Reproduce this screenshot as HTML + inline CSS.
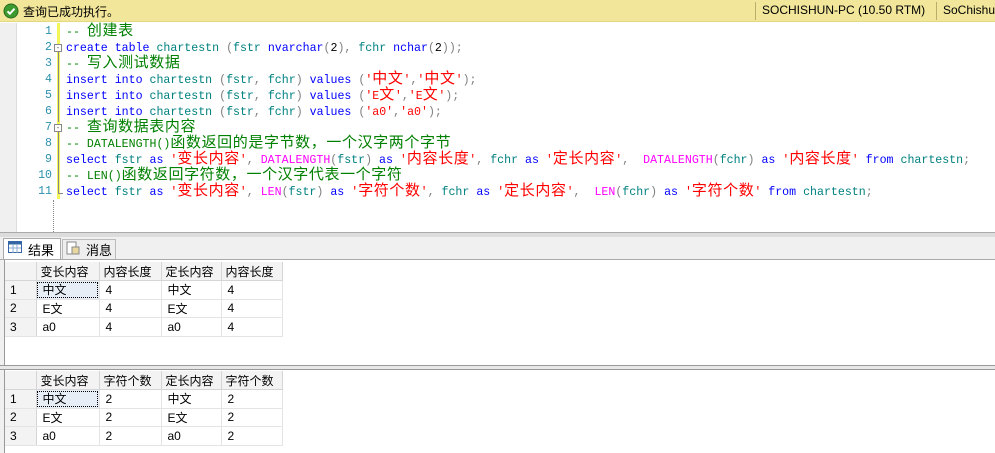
<!DOCTYPE html>
<html><head><meta charset="utf-8"><style>
*{margin:0;padding:0;box-sizing:border-box}
body{width:995px;height:453px;overflow:hidden;background:#fff;position:relative;font-family:"Liberation Sans","Noto Sans CJK SC",sans-serif;font-size:12px}
.abs{position:absolute}
#status{left:0;top:0;width:995px;height:22px;background:#f1e69a;border-bottom:1px solid #e5d980}
.sep{position:absolute;top:2px;width:1px;height:18px;background:#b8ad6a}
.code{position:absolute;left:66px;height:16px;font-family:"Liberation Mono","Noto Sans CJK SC",monospace;font-size:11.6px;white-space:pre;color:#000;line-height:16px}
.cj{font-family:"Noto Sans CJK SC",sans-serif;font-size:15px;line-height:0;letter-spacing:0.6px}
.k{color:#0000ff}.g{color:#008000}.r{color:#ff0000}.t{color:#008080}.m{color:#ff00ff}.p{color:#808080}
.ln{position:absolute;width:46px;text-align:right;font-family:"Liberation Mono",monospace;font-size:11.6px;color:#2b91af;line-height:16px}
table{border-collapse:collapse;position:absolute;left:5px}
td{height:18.5px;border-right:1px solid #e4e4e4;border-bottom:1px solid #e4e4e4;font-size:12px;padding:0 0 0 6px;white-space:nowrap}
tr.h td{background:#f3f3f3;border-right:1px solid #d5d5d5;border-bottom:1px solid #d5d5d5;padding-left:4px}
td.rh{background:#f3f3f3;width:31px;padding-left:5px;border-right:1px solid #d5d5d5}
td.sel{outline:1px dotted #000;outline-offset:-2px;background:#e8eef6}
</style></head><body>
<div id="status" class="abs">
 <svg class="abs" style="left:3px;top:3px" width="16" height="16"><circle cx="8" cy="8" r="7" fill="#3c9a2e" stroke="#2a6b20"/><path d="M4.5 8.3l2.4 2.4 4.6-5" stroke="#fff" stroke-width="2" fill="none"/></svg>
 <span class="abs" style="left:23px;top:3px">查询已成功执行。</span>
 <div class="sep" style="left:755px"></div>
 <span class="abs" style="left:762px;top:3px">SOCHISHUN-PC (10.50 RTM)</span>
 <div class="sep" style="left:936px"></div>
 <span class="abs" style="left:943px;top:3px">SoChishun</span>
</div>
<div class="abs" style="left:0;top:23px;width:17px;height:209px;background:#f0f0f0;border-right:1px solid #ddd"></div>
<div class="abs" style="left:57px;top:23px;width:3px;height:176px;background:#f5f55a"></div>
<div class="abs" style="left:53px;top:200px;width:0;height:32px;border-left:1px dotted #888"></div>
<div class="ln" style="left:6px;top:24px">1<br>2<br>3<br>4<br>5<br>6<br>7<br>8<br>9<br>10<br>11</div>
<div class="abs" style="left:54px;top:44px;width:8px;height:8px;border:1px solid #888;font-size:8px;line-height:6px;text-align:center;color:#555;background:#fff">-</div>
<div class="abs" style="left:54px;top:124px;width:8px;height:8px;border:1px solid #888;font-size:8px;line-height:6px;text-align:center;color:#555;background:#fff">-</div>
<div class="abs" style="left:58px;top:52px;width:1px;height:70px;background:#888"></div>
<div class="abs" style="left:58px;top:132px;width:1px;height:62px;background:#888"></div>
<div class="abs" style="left:58px;top:193px;width:5px;height:1px;background:#888"></div>
<div class="code" style="top:25px"><span class="g">-- <span class="cj">创建表</span></span></div>
<div class="code" style="top:41px"><span class="k">create table</span> <span class="t">chartestn</span> <span class="p">(</span><span class="t">fstr</span> <span class="k">nvarchar</span><span class="p">(</span>2<span class="p">),</span> <span class="t">fchr</span> <span class="k">nchar</span><span class="p">(</span>2<span class="p">));</span></div>
<div class="code" style="top:57px"><span class="g">-- <span class="cj">写入测试数据</span></span></div>
<div class="code" style="top:73px"><span class="k">insert into</span> <span class="t">chartestn</span> <span class="p">(</span><span class="t">fstr</span><span class="p">,</span> <span class="t">fchr</span><span class="p">)</span> <span class="k">values</span> <span class="p">(</span><span class="r">'<span class="cj">中文</span>'</span><span class="p">,</span><span class="r">'<span class="cj">中文</span>'</span><span class="p">);</span></div>
<div class="code" style="top:89px"><span class="k">insert into</span> <span class="t">chartestn</span> <span class="p">(</span><span class="t">fstr</span><span class="p">,</span> <span class="t">fchr</span><span class="p">)</span> <span class="k">values</span> <span class="p">(</span><span class="r">'E<span class="cj">文</span>'</span><span class="p">,</span><span class="r">'E<span class="cj">文</span>'</span><span class="p">);</span></div>
<div class="code" style="top:105px"><span class="k">insert into</span> <span class="t">chartestn</span> <span class="p">(</span><span class="t">fstr</span><span class="p">,</span> <span class="t">fchr</span><span class="p">)</span> <span class="k">values</span> <span class="p">(</span><span class="r">'a0'</span><span class="p">,</span><span class="r">'a0'</span><span class="p">);</span></div>
<div class="code" style="top:121px"><span class="g">-- <span class="cj">查询数据表内容</span></span></div>
<div class="code" style="top:137px"><span class="g">-- DATALENGTH()<span class="cj">函数返回的是字节数，一个汉字两个字节</span></span></div>
<div class="code" style="top:153px"><span class="k">select</span> <span class="t">fstr</span> <span class="k">as</span> <span class="r">'<span class="cj">变长内容</span>'</span><span class="p">,</span> <span class="m">DATALENGTH</span><span class="p">(</span><span class="t">fstr</span><span class="p">)</span> <span class="k">as</span> <span class="r">'<span class="cj">内容长度</span>'</span><span class="p">,</span> <span class="t">fchr</span> <span class="k">as</span> <span class="r">'<span class="cj">定长内容</span>'</span><span class="p">,</span>  <span class="m">DATALENGTH</span><span class="p">(</span><span class="t">fchr</span><span class="p">)</span> <span class="k">as</span> <span class="r">'<span class="cj">内容长度</span>'</span> <span class="k">from</span> <span class="t">chartestn</span><span class="p">;</span></div>
<div class="code" style="top:169px"><span class="g">-- LEN()<span class="cj">函数返回字符数，一个汉字代表一个字符</span></span></div>
<div class="code" style="top:185px"><span class="k">select</span> <span class="t">fstr</span> <span class="k">as</span> <span class="r">'<span class="cj">变长内容</span>'</span><span class="p">,</span> <span class="m">LEN</span><span class="p">(</span><span class="t">fstr</span><span class="p">)</span> <span class="k">as</span> <span class="r">'<span class="cj">字符个数</span>'</span><span class="p">,</span> <span class="t">fchr</span> <span class="k">as</span> <span class="r">'<span class="cj">定长内容</span>'</span><span class="p">,</span>  <span class="m">LEN</span><span class="p">(</span><span class="t">fchr</span><span class="p">)</span> <span class="k">as</span> <span class="r">'<span class="cj">字符个数</span>'</span> <span class="k">from</span> <span class="t">chartestn</span><span class="p">;</span></div>
<div class="abs" style="left:0;top:232px;width:995px;height:5px;background:#dcdcdc;border-top:1px solid #aaa"></div>
<div class="abs" style="left:0;top:237px;width:995px;height:22px;background:#f0f0f0"></div>
<div class="abs" style="left:3px;top:238px;width:58px;height:22px;background:#fff;border:1px solid #aaa;border-bottom:none"></div>
<svg class="abs" style="left:8px;top:241px" width="14" height="12"><rect x=".5" y=".5" width="13" height="11" fill="#fff" stroke="#3465a4"/><rect x=".5" y=".5" width="13" height="3" fill="#3465a4"/><path d="M1 7h12M5 4v8M9 4v8" stroke="#8aa8d0"/></svg>
<span class="abs" style="left:28px;top:240px;font-size:13px">结果</span>
<div class="abs" style="left:62px;top:239px;width:54px;height:20px;border:1px solid #bbb;border-bottom:none;background:#eee"></div>
<svg class="abs" style="left:66px;top:241px" width="14" height="14"><rect x="1" y="1" width="9" height="12" fill="#fff" stroke="#888"/><rect x="6" y="6" width="7" height="7" fill="#e8d8a0" stroke="#888"/></svg>
<span class="abs" style="left:86px;top:240px;font-size:13px">消息</span>
<div class="abs" style="left:0;top:259px;width:995px;height:1px;background:#aaa"></div>
<div class="abs" style="left:0;top:260px;width:5px;height:193px;background:#f0f0f0;border-right:1px solid #999"></div>
<div class="abs" style="left:0;top:365px;width:995px;height:5px;background:#e8e8e8;border-top:1px solid #999;border-bottom:1px solid #999"></div>
<table style="top:262px">
<tr class="h"><td style="width:31px"></td><td style="width:63px">变长内容</td><td style="width:62px">内容长度</td><td style="width:60px">定长内容</td><td style="width:61px">内容长度</td></tr>
<tr><td class="rh">1</td><td class="sel">中文</td><td>4</td><td>中文</td><td>4</td></tr>
<tr><td class="rh">2</td><td>E文</td><td>4</td><td>E文</td><td>4</td></tr>
<tr><td class="rh">3</td><td>a0</td><td>4</td><td>a0</td><td>4</td></tr>
</table>
<table style="top:371px">
<tr class="h"><td style="width:31px"></td><td style="width:63px">变长内容</td><td style="width:62px">字符个数</td><td style="width:60px">定长内容</td><td style="width:61px">字符个数</td></tr>
<tr><td class="rh">1</td><td class="sel">中文</td><td>2</td><td>中文</td><td>2</td></tr>
<tr><td class="rh">2</td><td>E文</td><td>2</td><td>E文</td><td>2</td></tr>
<tr><td class="rh">3</td><td>a0</td><td>2</td><td>a0</td><td>2</td></tr>
</table>
</body></html>
